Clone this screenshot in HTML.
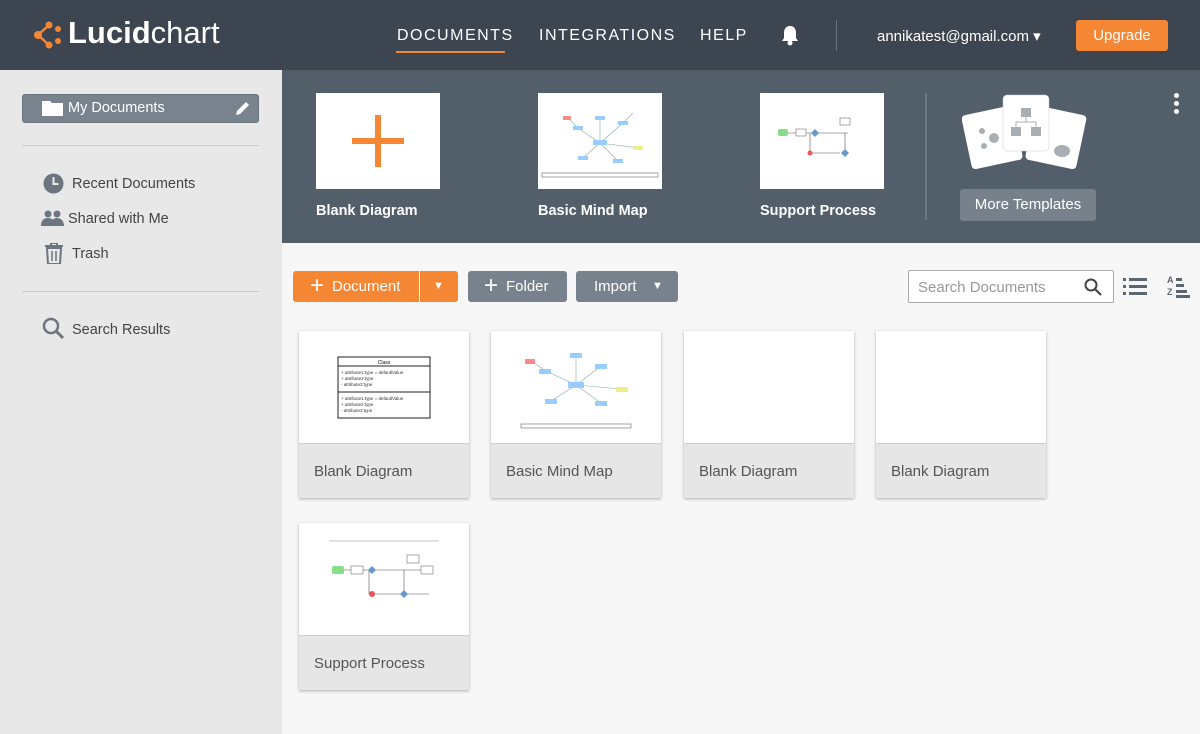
<!DOCTYPE html>
<html><head><meta charset="utf-8"><style>
*{box-sizing:border-box;margin:0;padding:0}
body{width:1200px;height:734px;overflow:hidden;font-family:"Liberation Sans",sans-serif;background:#f7f7f7;position:relative}
.a{position:absolute}
#hdr{left:0;top:0;width:1200px;height:70px;background:#3c4550}
.nav{color:#fff;font-size:16px;letter-spacing:1.5px;top:27px}
#side{left:0;top:70px;width:282px;height:664px;background:#e8e8e8}
#band{left:282px;top:70px;width:918px;height:173px;background:#525e6a}
.tpl{background:#fff;width:124px;height:96px;top:23px}
.tl{color:#fff;font-weight:bold;font-size:14.5px;top:133px}
.si{color:#444;font-size:14.5px}
.btn{height:31px;top:271px;border-radius:3px;color:#fff;font-size:15px;line-height:31px}
.card{width:170px;height:167px;background:#fff;box-shadow:0 1px 3px rgba(0,0,0,.3)}
.card .f{position:absolute;left:0;bottom:0;width:170px;height:55px;background:#e6e6e6;border-top:1px solid #ccc;color:#555;font-size:15px;padding:19px 0 0 15px}
</style></head><body>
<div id="hdr" class="a">
 <svg class="a" style="left:32px;top:20px" width="30" height="30" viewBox="0 0 30 30"><g fill="#f58634"><circle cx="6" cy="15" r="4"/><circle cx="17" cy="5" r="3.5"/><circle cx="17" cy="25" r="3.5"/><circle cx="26" cy="9" r="3"/><circle cx="26" cy="21" r="3"/></g><path d="M6 15L17 5M6 15L17 25" stroke="#f58634" stroke-width="2.5"/></svg>
 <div class="a" style="left:68px;top:15px;color:#fff;font-size:31px"><b>Lucid</b>chart</div>
 <div class="a nav" style="left:397px">DOCUMENTS</div>
 <div class="a" style="left:396px;top:51px;width:109px;height:2px;background:#f58634"></div>
 <div class="a nav" style="left:539px">INTEGRATIONS</div>
 <div class="a nav" style="left:700px">HELP</div>
 <svg class="a" style="left:779px;top:24px" width="22" height="22" viewBox="0 0 22 22"><path d="M11 2c-4 0-6 3-6 7v5l-2 3h16l-2-3V9c0-4-2-7-6-7z" fill="#fff"/><circle cx="11" cy="19" r="2.5" fill="#fff"/></svg>
 <div class="a" style="left:836px;top:20px;width:1px;height:31px;background:#6a737d"></div>
 <div class="a" style="left:877px;top:27px;color:#fff;font-size:15px">annikatest@gmail.com ▾</div>
 <div class="a" style="left:1076px;top:20px;width:92px;height:31px;background:#f58634;border-radius:3px;color:#fff;font-size:15px;text-align:center;line-height:31px">Upgrade</div>
</div>
<div id="side" class="a">
 <div class="a" style="left:22px;top:24px;width:237px;height:29px;background:#78838e;border-radius:3px;border:1px solid #6b7580"></div>
 <svg class="a" style="left:42px;top:30px" width="21" height="16"><path d="M0 1h8l2 2h11v13H0z" fill="#fff"/></svg>
 <div class="a" style="left:68px;top:30px;color:#fff;font-size:14.5px">My Documents</div>
 <svg class="a" style="left:234px;top:29px" width="18" height="18"><path d="M2 16l1-4 9-9 3 3-9 9z" fill="#fff"/></svg>
 <div class="a" style="left:22px;top:75px;width:237px;height:1px;background:#ccc"></div>
 <svg class="a" style="left:43px;top:103px" width="21" height="21"><circle cx="10.5" cy="10.5" r="10" fill="#6d7680"/><path d="M10.5 4v7h5" stroke="#e8e8e8" stroke-width="2" fill="none"/></svg>
 <div class="a si" style="left:72px;top:106px">Recent Documents</div>
 <svg class="a" style="left:41px;top:140px" width="24" height="16"><circle cx="7" cy="4" r="3.5" fill="#6d7680"/><circle cx="16" cy="4" r="3.5" fill="#6d7680"/><path d="M0 16c0-6 3-8 7-8s7 2 7 8zM10 16c0-6 3-8 6-8s7 2 7 8z" fill="#6d7680"/></svg>
 <div class="a si" style="left:68px;top:141px">Shared with Me</div>
 <svg class="a" style="left:45px;top:173px" width="18" height="21"><path d="M0 3h18M6 3V0h6v3" stroke="#6d7680" stroke-width="2" fill="none"/><path d="M2 5h14l-1 16H3z" fill="none" stroke="#6d7680" stroke-width="2"/><path d="M7 8v10M11 8v10" stroke="#6d7680" stroke-width="1.5"/></svg>
 <div class="a si" style="left:72px;top:176px">Trash</div>
 <div class="a" style="left:22px;top:221px;width:237px;height:1px;background:#ccc"></div>
 <svg class="a" style="left:42px;top:247px" width="24" height="24"><circle cx="9" cy="9" r="7" fill="none" stroke="#6d7680" stroke-width="2.5"/><path d="M14 14l7 7" stroke="#6d7680" stroke-width="3"/></svg>
 <div class="a si" style="left:72px;top:252px">Search Results</div>
</div>
<div id="band" class="a">
 <div class="a tpl" style="left:34px"><div class="a" style="left:59px;top:22px;width:6px;height:52px;background:#f58634"></div><div class="a" style="left:36px;top:45px;width:52px;height:6px;background:#f58634"></div></div>
 <div class="a tl" style="left:34px">Blank Diagram</div>
 <div class="a tpl" style="left:256px"><svg width="124" height="96"><g stroke="#8aa" stroke-width=".6"><path d="M62 50L40 35M62 50L85 30M62 50L45 65M62 50L80 68M62 50L62 25M62 50L100 55M40 35L30 25M85 30L95 20"/></g><g fill="#9cf"><rect x="55" y="47" width="14" height="5"/><rect x="35" y="33" width="10" height="4"/><rect x="80" y="28" width="10" height="4"/><rect x="40" y="63" width="10" height="4"/><rect x="75" y="66" width="10" height="4"/><rect x="57" y="23" width="10" height="4"/><rect x="95" y="53" width="10" height="4" fill="#ee8"/><rect x="25" y="23" width="8" height="4" fill="#f88"/></g><rect x="4" y="80" width="116" height="4" fill="none" stroke="#666" stroke-width=".6"/></svg></div>
 <div class="a tl" style="left:256px">Basic Mind Map</div>
 <div class="a tpl" style="left:478px"><svg width="124" height="96"><rect x="18" y="36" width="10" height="7" rx="2" fill="#8d8"/><path d="M28 40h60M50 40v20h30M85 40v20" stroke="#555" stroke-width=".6" fill="none"/><rect x="36" y="36" width="10" height="7" fill="#fff" stroke="#555" stroke-width=".5"/><path d="M55 36l4 4-4 4-4-4z" fill="#69c"/><rect x="80" y="25" width="10" height="7" fill="#fff" stroke="#555" stroke-width=".5"/><path d="M85 56l4 4-4 4-4-4z" fill="#69c"/><circle cx="50" cy="60" r="2.5" fill="#e55"/></svg></div>
 <div class="a tl" style="left:478px">Support Process</div>
 <div class="a" style="left:643px;top:23px;width:2px;height:127px;background:#6d7883"></div>
 <svg class="a" style="left:680px;top:24px" width="125" height="78"><rect x="4" y="16" width="52" height="55" rx="4" fill="#fff" transform="rotate(-12 30 43)"/><rect x="68" y="16" width="52" height="55" rx="4" fill="#fff" transform="rotate(12 94 43)"/><rect x="41" y="1" width="46" height="56" rx="4" fill="#fff" stroke="#ccc" stroke-width=".5"/><g fill="#a9aeb3"><rect x="59" y="14" width="10" height="9"/><rect x="49" y="33" width="10" height="9"/><rect x="69" y="33" width="10" height="9"/><circle cx="32" cy="44" r="5"/><circle cx="20" cy="37" r="3"/><circle cx="22" cy="52" r="3"/><ellipse cx="100" cy="57" rx="8" ry="6"/></g><path d="M64 23v5M54 33v-5h20v5" stroke="#a9aeb3" fill="none"/></svg>
 <div class="a" style="left:678px;top:119px;width:136px;height:32px;background:#76818c;border-radius:3px;color:#fff;font-size:15px;text-align:center;line-height:32px">More Templates</div>
 <div class="a" style="left:892px;top:23px;width:5px"><div style="width:5px;height:5px;border-radius:50%;background:#fff;margin-bottom:3px"></div><div style="width:5px;height:5px;border-radius:50%;background:#fff;margin-bottom:3px"></div><div style="width:5px;height:5px;border-radius:50%;background:#fff"></div></div>
</div>
<div class="a btn" style="left:293px;width:165px;background:#f58634"><span style="font-size:24px;position:absolute;left:17px;top:-1px">+</span><span style="position:absolute;left:39px">Document</span><div class="a" style="left:126px;top:0;width:1px;height:31px;background:#fff"></div><span class="a" style="left:140px;font-size:11px">▼</span></div>
<div class="a btn" style="left:468px;width:99px;background:#77828d"><span style="font-size:24px;position:absolute;left:16px;top:-1px">+</span><span style="position:absolute;left:38px">Folder</span></div>
<div class="a btn" style="left:576px;width:102px;background:#77828d"><span style="position:absolute;left:18px">Import</span><span class="a" style="left:76px;font-size:11px">▼</span></div>
<div class="a" style="left:908px;top:270px;width:206px;height:33px;background:#fff;border:1px solid #aaa;border-radius:2px;color:#999;font-size:15px;padding:8px 0 0 9px">Search Documents</div>
<svg class="a" style="left:1084px;top:278px" width="18" height="18"><circle cx="7" cy="7" r="5.5" fill="none" stroke="#444" stroke-width="2"/><path d="M11 11l6 6" stroke="#444" stroke-width="2.2"/></svg>
<svg class="a" style="left:1123px;top:277px" width="24" height="20"><g fill="#5d666f"><rect x="0" y="1" width="3" height="3"/><rect x="6" y="1" width="18" height="3"/><rect x="0" y="8" width="3" height="3"/><rect x="6" y="8" width="18" height="3"/><rect x="0" y="15" width="3" height="3"/><rect x="6" y="15" width="18" height="3"/></g></svg>
<div class="a" style="left:1167px;top:274px;font-size:9px;color:#5d666f;font-weight:bold;line-height:12px">A<br>Z</div>
<svg class="a" style="left:1176px;top:276px" width="15" height="22"><g fill="#5d666f"><rect x="0" y="2" width="6" height="3"/><rect x="0" y="8" width="8" height="3"/><rect x="0" y="14" width="11" height="3"/><rect x="0" y="19" width="14" height="3"/></g></svg>
<div class="a card" style="left:299px;top:331px"><svg width="170" height="112"><rect x="39" y="26" width="92" height="61" fill="none" stroke="#222"/><path d="M39 35h92M39 61h92" stroke="#222"/><text x="85" y="33" font-size="5" text-anchor="middle">Class</text><g font-size="4.5" fill="#333"><text x="42" y="43">+ attribute1:type = defaultValue</text><text x="42" y="49">+ attribute2:type</text><text x="42" y="55">- attribute3:type</text><text x="42" y="69">+ attribute1:type = defaultValue</text><text x="42" y="75">+ attribute2:type</text><text x="42" y="81">- attribute3:type</text></g></svg><div class="f">Blank Diagram</div></div>
<div class="a card" style="left:491px;top:331px"><svg width="170" height="112"><g stroke="#8aa" stroke-width=".6"><path d="M85 54L55 40M85 54L110 35M85 54L60 70M85 54L110 72M85 54L85 25M85 54L130 58M55 40L40 30"/></g><g fill="#9cf"><rect x="77" y="51" width="16" height="6"/><rect x="48" y="38" width="12" height="5"/><rect x="104" y="33" width="12" height="5"/><rect x="54" y="68" width="12" height="5"/><rect x="104" y="70" width="12" height="5"/><rect x="79" y="22" width="12" height="5"/><rect x="125" y="56" width="12" height="5" fill="#ee8"/><rect x="34" y="28" width="10" height="5" fill="#f88"/></g><rect x="30" y="93" width="110" height="4" fill="none" stroke="#666" stroke-width=".6"/></svg><div class="f">Basic Mind Map</div></div>
<div class="a card" style="left:684px;top:331px"><div class="f">Blank Diagram</div></div>
<div class="a card" style="left:876px;top:331px"><div class="f">Blank Diagram</div></div>
<div class="a card" style="left:299px;top:523px"><svg width="170" height="112"><path d="M30 18h110" stroke="#888" stroke-width=".5"/><rect x="33" y="43" width="12" height="8" rx="2" fill="#8d8"/><path d="M45 47h80M70 47v24h60M105 47v24" stroke="#555" stroke-width=".6" fill="none"/><rect x="52" y="43" width="12" height="8" fill="#fff" stroke="#555" stroke-width=".5"/><path d="M73 43l4 4-4 4-4-4z" fill="#69c"/><rect x="108" y="32" width="12" height="8" fill="#fff" stroke="#555" stroke-width=".5"/><rect x="122" y="43" width="12" height="8" fill="#fff" stroke="#555" stroke-width=".5"/><path d="M105 67l4 4-4 4-4-4z" fill="#69c"/><circle cx="73" cy="71" r="3" fill="#e55"/></svg><div class="f">Support Process</div></div>
</body></html>
